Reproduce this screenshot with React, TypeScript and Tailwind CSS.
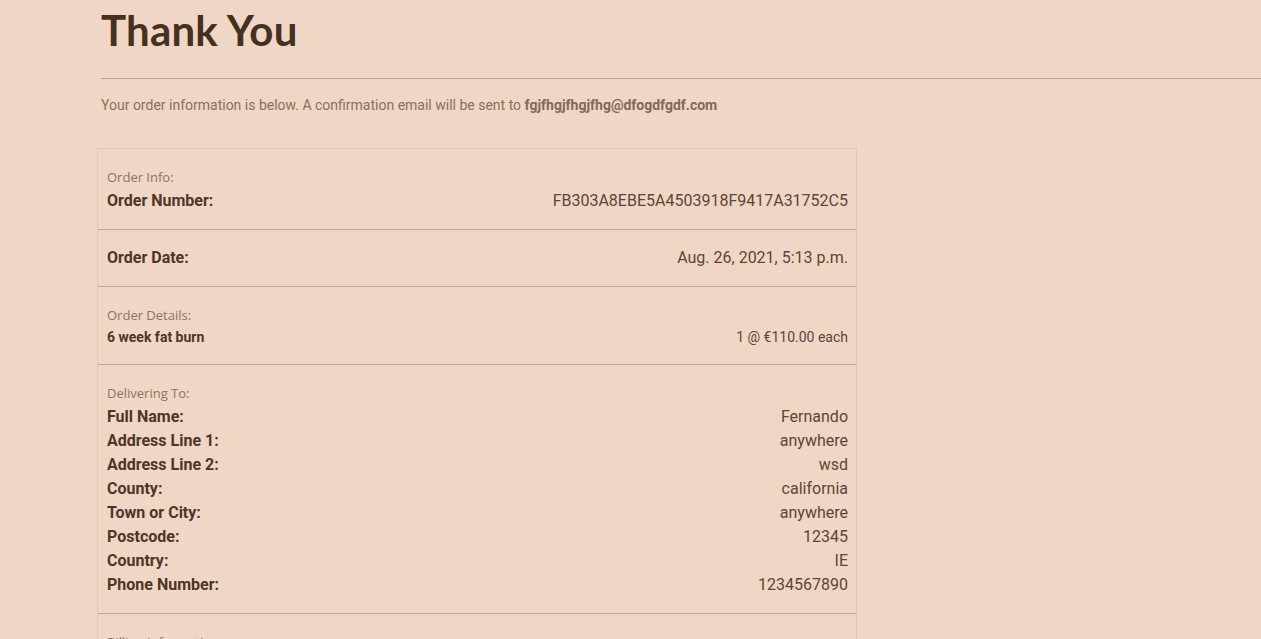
const delivery = [
  ['Full Name:', 'Fernando'],
  ['Address Line 1:', 'anywhere'],
  ['Address Line 2:', 'wsd'],
  ['County:', 'california'],
  ['Town or City:', 'anywhere'],
  ['Postcode:', '12345'],
  ['Country:', 'IE'],
  ['Phone Number:', '1234567890'],
];

function Caption({ children }: { children: React.ReactNode }) {
  return (
    <p className="text-[13px] leading-6 text-[#8a7464] font-['Open_Sans',sans-serif]">{children}</p>
  );
}

function Row({ label, value }: { label: string; value: string }) {
  return (
    <div className="flex justify-between leading-6 text-base">
      <span className="font-bold text-[#4e3526]">{label}</span>
      <span className="text-[#5c4536]">{value}</span>
    </div>
  );
}

export default function App() {
  return (
    <div className="min-h-screen bg-[#f0d6c5] font-['Roboto',sans-serif] overflow-hidden">
      <div className="pl-[101px]">
        <h1 className="pt-1 text-[42px] leading-[52px] font-bold tracking-[0.2px] text-[#45311f] font-['Lato',sans-serif]">
          Thank You
        </h1>
        <hr className="mt-[22px] border-t border-[#bda493]" />
        <p className="mt-4 text-sm leading-[21px] text-[#86715f]">
          Your order information is below. A confirmation email will be sent to{' '}
          <strong className="font-bold text-[#806a58]">fgjfhgjfhgjfhg@dfogdfgdf.com</strong>
        </p>
      </div>

      <div className="ml-[97px] mt-8 w-[760px] border border-[#e5c9b6]">
        <div className="pl-[9px] pr-2 py-4 border-b border-[#c5a897]">
          <Caption>Order Info:</Caption>
          <Row label="Order Number:" value="FB303A8EBE5A4503918F9417A31752C5" />
        </div>
        <div className="pl-[9px] pr-2 py-4 border-b border-[#c5a897]">
          <Row label="Order Date:" value="Aug. 26, 2021, 5:13 p.m." />
        </div>
        <div className="pl-[9px] pr-2 py-4 border-b border-[#c5a897]">
          <Caption>Order Details:</Caption>
          <div className="flex justify-between text-sm leading-[21px]">
            <span className="font-bold text-[#4e3526]">6 week fat burn</span>
            <span className="text-[#5c4536]">1 @ €110.00 each</span>
          </div>
        </div>
        <div className="pl-[9px] pr-2 py-4 border-b border-[#c5a897]">
          <Caption>Delivering To:</Caption>
          {delivery.map(([label, value]) => (
            <Row key={label} label={label} value={value} />
          ))}
        </div>
        <div className="pl-[9px] pr-2 py-4">
          <Caption>Billing Information:</Caption>
        </div>
      </div>
    </div>
  );
}
